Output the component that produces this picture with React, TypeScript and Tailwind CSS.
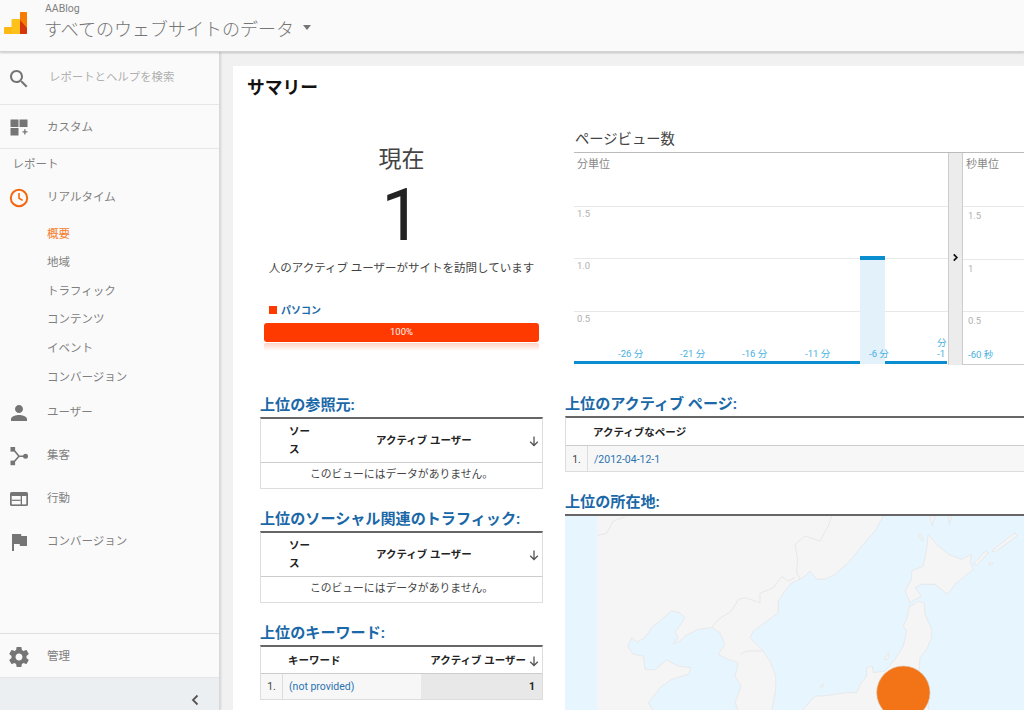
import React from "react";

const P = "M15.5 14h-.79l-.28-.27C15.41 12.59 16 11.11 16 9.5 16 5.91 13.09 3 9.5 3S3 5.91 3 9.5 5.91 16 9.5 16c1.61 0 3.09-.59 4.23-1.57l.27.28v.79l5 4.99L20.49 19l-4.99-5zm-6 0C7.01 14 5 11.99 5 9.5S7.01 5 9.5 5 14 7.01 14 9.5 11.99 14 9.5 14z";
const PERSON = "M12 12c2.21 0 4-1.79 4-4s-1.79-4-4-4-4 1.79-4 4 1.79 4 4 4zm0 2c-2.67 0-8 1.34-8 4v2h16v-2c0-2.66-5.33-4-8-4z";
const GEAR = "M19.43 12.98c.04-.32.07-.64.07-.98s-.03-.66-.07-.98l2.11-1.65c.19-.15.24-.42.12-.64l-2-3.46c-.12-.22-.39-.3-.61-.22l-2.49 1c-.52-.4-1.08-.73-1.69-.98l-.38-2.65C14.46 2.18 14.25 2 14 2h-4c-.25 0-.46.18-.49.42l-.38 2.65c-.61.25-1.17.59-1.69.98l-2.49-1c-.23-.09-.49 0-.61.22l-2 3.46c-.13.22-.07.49.12.64l2.11 1.65c-.04.32-.07.65-.07.98s.03.66.07.98l-2.11 1.65c-.19.15-.24.42-.12.64l2 3.46c.12.22.39.3.61.22l2.49-1c.52.4 1.08.73 1.69.98l.38 2.65c.03.24.24.42.49.42h4c.25 0 .46-.18.49-.42l.38-2.65c.61-.25 1.17-.59 1.69-.98l2.49 1c.23.09.49 0 .61-.22l2-3.46c.12-.22.07-.49-.12-.64l-2.11-1.65zM12 15.5c-1.93 0-3.5-1.57-3.5-3.5s1.57-3.5 3.5-3.5 3.5 1.57 3.5 3.5-1.57 3.5-3.5 3.5z";
const FLAG = "M14.4 6L14 4H5v17h2v-7h5.6l.4 2h7V6z";

function Icon({ children }: { children: React.ReactNode }) {
  return (
    <svg viewBox="0 0 24 24" className="h-6 w-6 shrink-0" fill="#757575">
      {children}
    </svg>
  );
}

function NavRow({ icon, label, h = "h-[43px]" }: { icon: React.ReactNode; label: string; h?: string }) {
  return (
    <div className={`${h} flex shrink-0 items-center pt-[2px] pl-[7px]`}>
      {icon}
      <span className="ml-[16px] text-[11.5px] text-[#808080]">{label}</span>
    </div>
  );
}

function SubItem({ label, active }: { label: string; active?: boolean }) {
  return (
    <div className={`flex h-[28.6px] items-center pt-[2px] pl-[47px] text-[11.5px] ${active ? "text-[#f57c2c]" : "text-[#808080]"}`}>
      {label}
    </div>
  );
}

function Heading({ children }: { children: React.ReactNode }) {
  return (
    <div className="flex h-[23px] items-start text-[15.1px] leading-[22px] font-bold whitespace-nowrap text-[#1a68a8]">
      {children}
    </div>
  );
}

function Arrow() {
  return (
    <svg viewBox="0 0 12 12" className="h-3 w-3" fill="none" stroke="#555" strokeWidth="1.3">
      <path d="M6 1.5v9M2.2 6.8 6 10.5l3.8-3.7" />
    </svg>
  );
}

function EmptyTable() {
  return (
    <div className="border-x border-t-2 border-b border-x-[#ddd] border-t-[#666] border-b-[#ddd]">
      <div className="flex h-[44px] items-center border-b border-[#ccc] text-[10.5px] font-bold text-[#222]">
        <div className="ml-[28px] w-[22px] leading-[18px]">ソース</div>
        <div className="ml-[65px] w-[100px] whitespace-nowrap">アクティブ ユーザー</div>
        <div className="mr-[2px] ml-auto"><Arrow /></div>
      </div>
      <div className="flex h-[25px] items-center justify-center text-[10.8px] whitespace-nowrap text-[#444]">
        このビューにはデータがありません。
      </div>
    </div>
  );
}

function PanelGrid({ lines }: { lines: number[] }) {
  return (
    <>
      {lines.map((y) => (
        <div key={y} className="absolute inset-x-0 h-px bg-[#e8e8e8]" style={{ top: y }} />
      ))}
    </>
  );
}

function Tick({ x, y = 195, label }: { x: number; y?: number; label: string }) {
  return (
    <span className="absolute text-[9.5px] leading-3 whitespace-nowrap text-[#45b0e0]" style={{ left: x, top: y }}>
      {label}
    </span>
  );
}

function AxisLabel({ x, y, label }: { x: number; y: number; label: string }) {
  return (
    <span className="absolute text-[9.5px] leading-3 text-[#b0b0b0]" style={{ left: x, top: y }}>
      {label}
    </span>
  );
}

function MapView() {
  const coast = { fill: "#f5f5f5", stroke: "#e6e6e6", strokeWidth: 2.5, strokeLinejoin: "round" as const };
  return (
    <svg viewBox="0 0 1377 585" className="block h-[195px] w-[459px]">
      <rect width="1377" height="585" fill="#e6f5fe" />
      <path
        fill="#f5f5f5"
        stroke="#f5f5f5"
        d="M98 0H955L930 45 890 90 855 135 810 175 780 190 755 190 735 165 720 180 695 195 680 200 660 225 640 255 640 290 600 320 565 345 555 365 590 400 615 435 632 480 632 520 620 585H520L510 560 520 535 528 510 510 480 520 440 490 430 460 415 480 385 465 350 440 335 400 340 360 360 345 375 325 385 340 365 330 350 360 305 345 290 320 285 290 310 260 335 240 365 215 378 200 365 188 390 205 415 235 420 240 460 270 462 305 432 340 450 378 455 370 475 320 490 285 515 250 560 265 585H98Z"
      />
      <path
        fill="none"
        stroke="#e6e6e6"
        strokeWidth="2.5"
        strokeLinejoin="round"
        d="M955 0 930 45 890 90 855 135 810 175 780 190 755 190 735 165 720 180 695 195 680 200 660 225 640 255 640 290 600 320 565 345 555 365 590 400 615 435 632 480 632 520 620 585M520 585 510 560 520 535 528 510 510 480 520 440 490 430 460 415 480 385 465 350 440 335 400 340 360 360 345 375 325 385 340 365 330 350 360 305 345 290 320 285 290 310 260 335 240 365 215 378 200 365 188 390 205 415 235 420 240 460 270 462 305 432 340 450 378 455 370 475 320 490 285 515 250 560 265 585"
      />
      <path
        fill="none"
        stroke="#e4e4e4"
        strokeWidth="2.5"
        strokeLinejoin="round"
        d="M98 58 125 52 145 15 180 3M650 182 625 215 585 232 585 260 540 245 520 250 500 285 460 310 440 335M650 182 670 195 690 185M525 415 545 405 590 405M800 0 790 30 765 75 720 60 690 85 698 130 695 170 705 190"
      />
      <path
        {...coast}
        d="M1090 55 1115 85 1150 115 1190 130 1220 115 1215 140 1225 160 1200 180 1170 205 1148 235 1110 205 1070 205 1050 215 1070 240 1035 260 1020 225 1040 190 1040 165 1075 150 1085 100Z"
      />
      <path
        {...coast}
        d="M1040 270 1060 255 1078 262 1080 295 1100 340 1100 365 1085 400 1065 425 1062 470 1090 530 1090 585H710L750 540 775 540 845 530 875 530 885 505 905 480 905 455 922 450 925 470 960 465 990 430 1015 390 1025 345 1015 330 1025 310 1035 265Z"
      />
      <path {...coast} d="M1095 0h15l-8 30ZM1150 0h10l-7 25ZM1060 55l6-2 10 20-5 2ZM958 430l12-22 2 14-6 10ZM765 510l10-5 1 5-8 6Z" />
      <path {...coast} d="M1225 145 1262 105 1270 110 1235 148ZM1280 105 1350 50 1356 60 1290 108ZM1270 142l12-3 1 5-11 3Z" />
      <circle cx="1015" cy="530" r="80" fill="#f27417" stroke="#d9c8ba" strokeWidth="2" />
    </svg>
  );
}

export default function App() {
  return (
    <div className="flex h-[710px] w-[1024px] flex-col overflow-hidden bg-[#f1f1f1] [font-family:Roboto,'Noto_Sans_CJK_JP',sans-serif]">
      <header className="relative z-10 flex h-[52px] shrink-0 items-start border-b border-[#d4d4d4] bg-[#fafafa] shadow-[0_1px_2px_rgba(0,0,0,0.2)]">
        <svg viewBox="0 0 23 23" className="mt-[12px] ml-[4px] h-[23px] w-[23px] shrink-0">
          <path d="M1 15h7v7H1a1 1 0 0 1-1-1v-5a1 1 0 0 1 1-1Z" fill="#fdb813" />
          <path d="M8.5 7H16v15H7.5V8a1 1 0 0 1 1-1Z" fill="#fcc21b" />
          <path d="M16 1a1 1 0 0 1 1-1h5a1 1 0 0 1 1 1v20a1 1 0 0 1-1 1h-6Z" fill="#f57c00" />
          <path d="M16 8l7 8v5a1 1 0 0 1-1 1h-6Z" fill="#d8340a" />
        </svg>
        <div className="ml-[18px] flex flex-col">
          <div className="mt-[2px] text-[10.5px] leading-[14px] text-[#808080]">AABlog</div>
          <div className="-ml-px flex items-center pt-[1px]">
            <span className="text-[18px] leading-[26px] font-light whitespace-nowrap text-[#757575]">すべてのウェブサイトのデータ</span>
            <span className="mb-[5px] ml-[9px] h-0 w-0 border-x-[4.5px] border-t-[5px] border-x-transparent border-t-[#757575]" />
          </div>
        </div>
      </header>

      <div className="flex min-h-0 flex-1">
        <aside className="flex w-[220px] shrink-0 flex-col border-r border-[#d8d8d8] bg-[#fafafa] shadow-[1px_0_2px_rgba(0,0,0,0.12)]">
          <div className="flex h-[53px] shrink-0 items-center border-b border-[#e6e6e6] pt-[2px] pl-[7px]">
            <Icon><path d={P} /></Icon>
            <span className="mb-[3px] ml-[18px] text-[11.4px] text-[#b0b0b0]">レポートとヘルプを検索</span>
          </div>
          <div className="flex h-[44px] shrink-0 items-center border-b border-[#e6e6e6] pt-[2px] pl-[7px]">
            <svg viewBox="0 0 24 24" className="h-6 w-6 shrink-0" fill="#757575">
              <path d="M3.5 3.5h8v7.5h-8zM12.5 3.5h8v7.5h-8zM3.5 12h8v7.5h-8zM15.5 15.2h1.7v-2h1.3v2h2v1.4h-2v2h-1.3v-2h-1.7z" />
            </svg>
            <span className="ml-[16px] text-[11.5px] text-[#808080]">カスタム</span>
          </div>
          <div className="flex h-[30px] shrink-0 items-center pt-[2px] pl-[12.5px] text-[11.5px] text-[#808080]">レポート</div>
          <div className="flex h-[36px] shrink-0 items-center pt-[2px] pl-[7px]">
            <svg viewBox="0 0 24 24" className="h-6 w-6 shrink-0" fill="none" stroke="#f5670f" strokeWidth="2">
              <circle cx="12" cy="12" r="8.2" />
              <path d="M12 7v5.2l3.6 2.2" strokeWidth="1.6" />
            </svg>
            <span className="ml-[16px] text-[11.5px] text-[#808080]">リアルタイム</span>
          </div>
          <div className="mt-[4px] shrink-0">
            <SubItem label="概要" active />
            <SubItem label="地域" />
            <SubItem label="トラフィック" />
            <SubItem label="コンテンツ" />
            <SubItem label="イベント" />
            <SubItem label="コンバージョン" />
          </div>
          <NavRow icon={<Icon><path d={PERSON} /></Icon>} label="ユーザー" />
          <NavRow
            icon={
              <svg viewBox="0 0 24 24" className="h-6 w-6 shrink-0" fill="#757575">
                <path d="M6 5 12 12.2H17M6 19 12 12.2" fill="none" stroke="#757575" strokeWidth="1.6" />
                <rect x="3.5" y="3" width="4.6" height="4.6" />
                <rect x="3.5" y="16.6" width="4.6" height="4.6" />
                <circle cx="18.5" cy="12.2" r="2.5" />
              </svg>
            }
            label="集客"
          />
          <NavRow
            icon={
              <svg viewBox="0 0 24 24" className="h-6 w-6 shrink-0">
                <rect x="3" y="5" width="18" height="14" rx="1.6" fill="#757575" />
                <rect x="4.7" y="9" width="9" height="8.4" fill="#fafafa" />
                <rect x="15" y="9" width="4.3" height="8.4" fill="#fafafa" />
                <rect x="4.7" y="12.7" width="9" height="1.2" fill="#757575" />
              </svg>
            }
            label="行動"
          />
          <NavRow icon={<Icon><path d={FLAG} /></Icon>} label="コンバージョン" />
          <div className="flex-1" />
          <div className="flex h-[44px] shrink-0 items-center border-t border-[#e0e0e0] pt-[2px] pl-[7px]">
            <Icon><path d={GEAR} /></Icon>
            <span className="ml-[16px] text-[11.5px] text-[#808080]">管理</span>
          </div>
          <div className="flex h-[33px] shrink-0 items-center justify-end border-t border-[#e4e7ea] bg-[#eceff1] pt-[12px] pr-[19px]">
            <svg viewBox="0 0 10 12" className="h-[12px] w-[10px]" fill="none" stroke="#555" strokeWidth="1.8">
              <path d="M7.5 1.5 3 6l4.5 4.5" />
            </svg>
          </div>
        </aside>

        <main className="min-w-0 flex-1 pt-[14px] pl-[13px]">
          <div className="h-full overflow-hidden bg-white">
            <h1 className="flex h-[42px] items-center pt-[2px] pl-[14px] text-[17.8px] font-bold text-[#111]">サマリー</h1>
            <div className="flex pl-[27px]">
              <div className="w-[283px] shrink-0">
                <div className="mt-[37px] h-[30px] text-center text-[23px] leading-[30px] text-[#444]">現在</div>
                <div className="mt-[6px] h-[70px] text-center text-[72px] leading-[70px] font-normal text-[#222]">1</div>
                <div className="mt-[8px] h-[18px] text-center text-[11.5px] leading-[18px] whitespace-nowrap text-[#444]">人のアクティブ ユーザーがサイトを訪問しています</div>
                <div className="mt-[26px] flex h-[14px] items-center pl-[9px]">
                  <span className="h-[8px] w-[8px] bg-[#ff3a00]" />
                  <span className="ml-[4px] text-[10px] font-bold text-[#1a68a8]">パソコン</span>
                </div>
                <div className="mx-[4px] mt-[6px] flex h-[19px] items-center justify-center rounded-[3px] bg-[#ff3a00] text-[9.5px] text-[#f5f5f5]">100%</div>
                <div className="mx-[4px] mt-px h-[8px] rounded-t-[2px] bg-gradient-to-b from-[#ffd2c4] to-white" />

                <div className="mt-[43px]"><Heading>上位の参照元:</Heading></div>
                <EmptyTable />
                <div className="mt-[19px]"><Heading>上位のソーシャル関連のトラフィック:</Heading></div>
                <EmptyTable />
                <div className="mt-[19px]"><Heading>上位のキーワード:</Heading></div>
                <div className="border-x border-t-2 border-b border-x-[#ddd] border-t-[#666] border-b-[#ddd]">
                  <div className="flex h-[27px] items-center border-b border-[#ccc] pt-[1px] text-[10.5px] font-bold text-[#222]">
                    <div className="ml-[27px]">キーワード</div>
                    <div className="ml-auto whitespace-nowrap">アクティブ ユーザー</div>
                    <div className="mr-[2px] ml-[2px]"><Arrow /></div>
                  </div>
                  <div className="flex h-[25px] items-stretch pb-0 text-[10.5px]">
                    <div className="flex w-[22px] items-center justify-center border-r border-[#ddd] bg-[#f7f7f7] text-[#444]">1.</div>
                    <div className="flex flex-1 items-center bg-[#f7f7f7] pl-[6px] text-[#2b73b0]">(not provided)</div>
                    <div className="flex w-[121px] items-center justify-end bg-[#e8e8e8] pr-[7px] font-bold text-[#222]">1</div>
                  </div>
                </div>
              </div>

              <div className="ml-[22px] min-w-0 flex-1">
                <div className="mt-[20px] ml-[10px] h-[22px] text-[14.3px] leading-[22px] text-[#444]">ページビュー数</div>
                <div className="mt-[2px] ml-[9px] flex h-[213px] border-t border-[#bbb]">
                  <div className="relative w-[374px] shrink-0">
                    <span className="absolute top-[5px] left-[3px] text-[11px] leading-[14px] text-[#888]">分単位</span>
                    <PanelGrid lines={[53, 105, 158]} />
                    <AxisLabel x={3} y={55} label="1.5" />
                    <AxisLabel x={3} y={107} label="1.0" />
                    <AxisLabel x={3} y={160} label="0.5" />
                    <div className="absolute top-[103px] left-[286px] h-[108px] w-[25px] bg-[#e3f1fa]" />
                    <div className="absolute top-[103px] left-[286px] h-[4px] w-[25px] bg-[#0b8ed0]" />
                    <div className="absolute top-[208px] left-0 h-[3px] w-[286px] bg-[#0b8ed0]" />
                    <div className="absolute top-[208px] left-[311px] h-[3px] w-[62px] bg-[#0b8ed0]" />
                    <Tick x={44} label="-26 分" />
                    <Tick x={106} label="-21 分" />
                    <Tick x={168} label="-16 分" />
                    <Tick x={231} label="-11 分" />
                    <Tick x={295} label="-6 分" />
                    <Tick x={363} y={184} label="分" />
                    <Tick x={363} label="-1" />
                  </div>
                  <div className="flex w-[15px] shrink-0 items-start justify-center border-x border-[#ccc] bg-[#ececec] pt-[100px]">
                    <svg viewBox="0 0 8 10" className="h-[9px] w-[7px]" fill="none" stroke="#111" strokeWidth="2">
                      <path d="M2 1.5 5.5 5 2 8.5" />
                    </svg>
                  </div>
                  <div className="relative min-w-0 flex-1">
                    <span className="absolute top-[5px] left-[3px] text-[11px] leading-[14px] text-[#888]">秒単位</span>
                    <PanelGrid lines={[53, 106, 158]} />
                    <AxisLabel x={5} y={57} label="1.5" />
                    <AxisLabel x={5} y={110} label="1" />
                    <AxisLabel x={5} y={162} label="0.5" />
                    <Tick x={5} y={196} label="-60 秒" />
                    <div className="absolute inset-x-0 top-[211px] h-px bg-[#ccc]" />
                  </div>
                </div>

                <div className="mt-[28px]"><Heading>上位のアクティブ ページ:</Heading></div>
                <div className="border-t-2 border-b border-l border-t-[#666] border-b-[#ddd] border-l-[#ddd]">
                  <div className="flex h-[28px] items-center border-b border-[#ccc] pt-[2px] pl-[27px] text-[10.5px] font-bold text-[#222]">アクティブなページ</div>
                  <div className="flex h-[25px] items-stretch bg-[#f7f7f7] text-[10.5px]">
                    <div className="flex w-[22px] items-center justify-center border-r border-[#ddd] pt-[2px] text-[#444]">1.</div>
                    <div className="flex items-center pt-[2px] pl-[6px] text-[#2b73b0]">/2012-04-12-1</div>
                  </div>
                </div>
                <div className="mt-[19px]"><Heading>上位の所在地:</Heading></div>
                <div className="border-t-2 border-[#666]">
                  <MapView />
                </div>
              </div>
            </div>
          </div>
        </main>
      </div>
    </div>
  );
}
